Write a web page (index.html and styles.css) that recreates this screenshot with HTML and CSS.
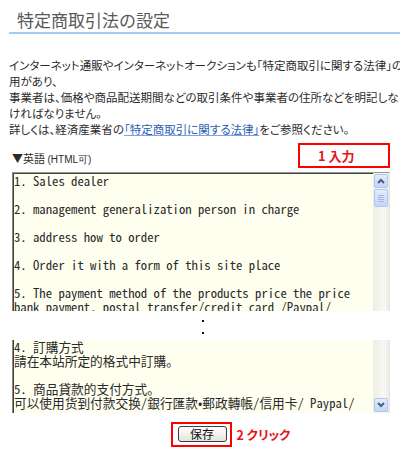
FILE: index.html
```html
<!DOCTYPE html>
<html lang="ja">
<head>
<meta charset="utf-8">
<title>特定商取引法の設定</title>
<link rel="stylesheet" href="styles.css">
</head>
<body>
<div class="page">
  <h1 class="title">特定商取引法の設定</h1>
  <p class="intro">インターネット通販やインターネットオークションも「特定商取引に関する法律」の適<br>用があり、<br>事業者は、価格や商品配送期間などの取引条件や事業者の住所などを明記しな<br>ければなりません。<br>詳しくは、経済産業省の<a href="#">「特定商取引に関する法律」</a>をご参照ください。</p>

  <div class="field-head">
    <span class="label">▼英語 <small>(HTML可)</small></span>
    <span class="badge">1&nbsp;入力</span>
  </div>

  <div class="ta ta-top">
    <div class="ta-text">1. Sales dealer

2. management generalization person in charge

3. address how to order

4. Order it with a form of this site place

5. The payment method of the products price the price
bank payment, postal transfer/credit card /Paypal/</div>
    <div class="sb">
      <div class="sb-btn"><svg width="8" height="6" viewBox="0 0 8 6"><path d="M1 5 L4 2 L7 5" fill="none" stroke="#4a5d82" stroke-width="2"/></svg></div>
      <div class="sb-thumb"><i></i><i></i><i></i><i></i></div>
    </div>
  </div>

  <div class="elide"><i></i><i></i></div>

  <div class="ta ta-bottom">
    <div class="ta-text">4. 訂購方式
請在本站所定的格式中訂購。

5. 商品貸款的支付方式。
可以使用货到付款交换/銀行匯款・郵政轉帳/信用卡/ Paypal/</div>
    <div class="sb sb-end">
      <div class="sb-btn"><svg width="8" height="6" viewBox="0 0 8 6"><path d="M1 1 L4 4 L7 1" fill="none" stroke="#4a5d82" stroke-width="2"/></svg></div>
    </div>
  </div>

  <div class="actions">
    <span class="btn-box"><button class="btn" type="button">保存</button></span>
    <span class="note">2&nbsp;クリック</span>
  </div>
</div>
</body>
</html>
```

FILE: styles.css
```css
* { box-sizing: border-box; }

html, body {
  margin: 0;
  padding: 0;
  overflow: hidden;
  background: #fff;
}

body {
  width: 400px;
  height: 450px;
  font-family: "Noto Sans CJK JP", sans-serif;
  color: #333;
}

.page {
  padding-left: 9px;
}

.title {
  margin: 0;
  padding: 10px 0 2px 8px;
  font-size: 17px;
  line-height: 20px;
  font-weight: 400;
  color: #595959;
  border-bottom: 2px solid #a6c9ef;
}

.intro {
  margin: 23px 0 0;
  font-size: 11.5px;
  line-height: 16px;
  white-space: nowrap;
  font-feature-settings: "palt";
  color: #2b2b2b;
}

.intro a {
  color: #2a5db0;
  text-decoration: underline;
  text-decoration-color: #7aa4e4;
}

.field-head {
  display: flex;
  justify-content: space-between;
  align-items: flex-end;
  margin-top: 6px;
  width: 381px;
}

.label {
  font-size: 11px;
  line-height: 14px;
  padding: 0 0 1px 3px;
  color: #2b2b2b;
}

.label small {
  font-family: "Liberation Sans", sans-serif;
  font-size: 10px;
}

.badge {
  width: 92px;
  height: 25px;
  border: 2px solid #f00;
  color: #e8121a;
  font-weight: 700;
  font-size: 13px;
  line-height: 21px;
  padding-left: 18px;
  font-feature-settings: "palt";
}

.ta {
  margin-left: 3px;
  width: 378px;
  display: flex;
  background: #fffff0;
  border-left: 1px solid #8a8a8a;
  border-right: 1px solid #e4e4dc;
}

.ta-top {
  margin-top: 4px;
  height: 139px;
  border-top: 1px solid #9a9a9a;
  box-shadow: inset 1px 1px 0 #404040;
}

.ta-bottom {
  height: 73px;
  box-shadow: inset 1px 0 0 #404040;
}

.ta-text {
  flex: 1;
  padding: 1px 0 0 1px;
  font-family: "Noto Sans Mono CJK TC", "Liberation Mono", monospace;
  font-size: 12.7px;
  line-height: 14px;
  white-space: pre;
  overflow: hidden;
  color: #2a2a2a;
}

.ta-bottom .ta-text {
  padding-top: 0;
}

.sb {
  width: 16px;
  flex: none;
  display: flex;
  flex-direction: column;
  background: linear-gradient(to right, #eeeee8, #f7f7f3 70%, #ececE6);
}

.sb-end {
  justify-content: flex-end;
}

.sb-btn,
.sb-thumb {
  width: 14px;
  margin: 1px;
  border: 1px solid #b3c6ed;
  border-radius: 2px;
  background: linear-gradient(#e4ecfd, #c4d5f7);
  display: flex;
  align-items: center;
  justify-content: center;
}

.sb-btn {
  height: 14px;
}

.sb-thumb {
  height: 18px;
  margin-top: 0;
  flex-direction: column;
  gap: 1px;
}

.sb-thumb i {
  display: block;
  width: 6px;
  height: 1px;
  background: #a4b8e4;
}

.elide {
  width: 378px;
  margin-left: 3px;
  height: 29px;
  display: flex;
  flex-direction: column;
  align-items: center;
  padding: 9px 0 0 4px;
  gap: 10px;
}

.elide i {
  display: block;
  width: 2px;
  height: 2px;
  background: #111;
}

.actions {
  margin: 9px 0 0 3px;
  width: 378px;
  display: grid;
  grid-template-columns: 1fr auto 1fr;
  align-items: center;
}

.btn-box {
  grid-column: 2;
  display: flex;
  border: 2px solid #f00;
  padding: 2px 3px 3px 5px;
}

.btn {
  width: 49px;
  height: 16px;
  padding: 0;
  font-family: "Noto Sans CJK JP", sans-serif;
  font-size: 12px;
  line-height: 14px;
  color: #111;
  border: 1px solid #3c3c3c;
  border-radius: 3px;
  background: linear-gradient(#ffffff, #e4e4de);
}

.note {
  justify-self: start;
  margin-left: 5px;
  color: #e8121a;
  font-weight: 700;
  font-size: 12.5px;
  line-height: 16px;
  font-feature-settings: "palt";
}
```
